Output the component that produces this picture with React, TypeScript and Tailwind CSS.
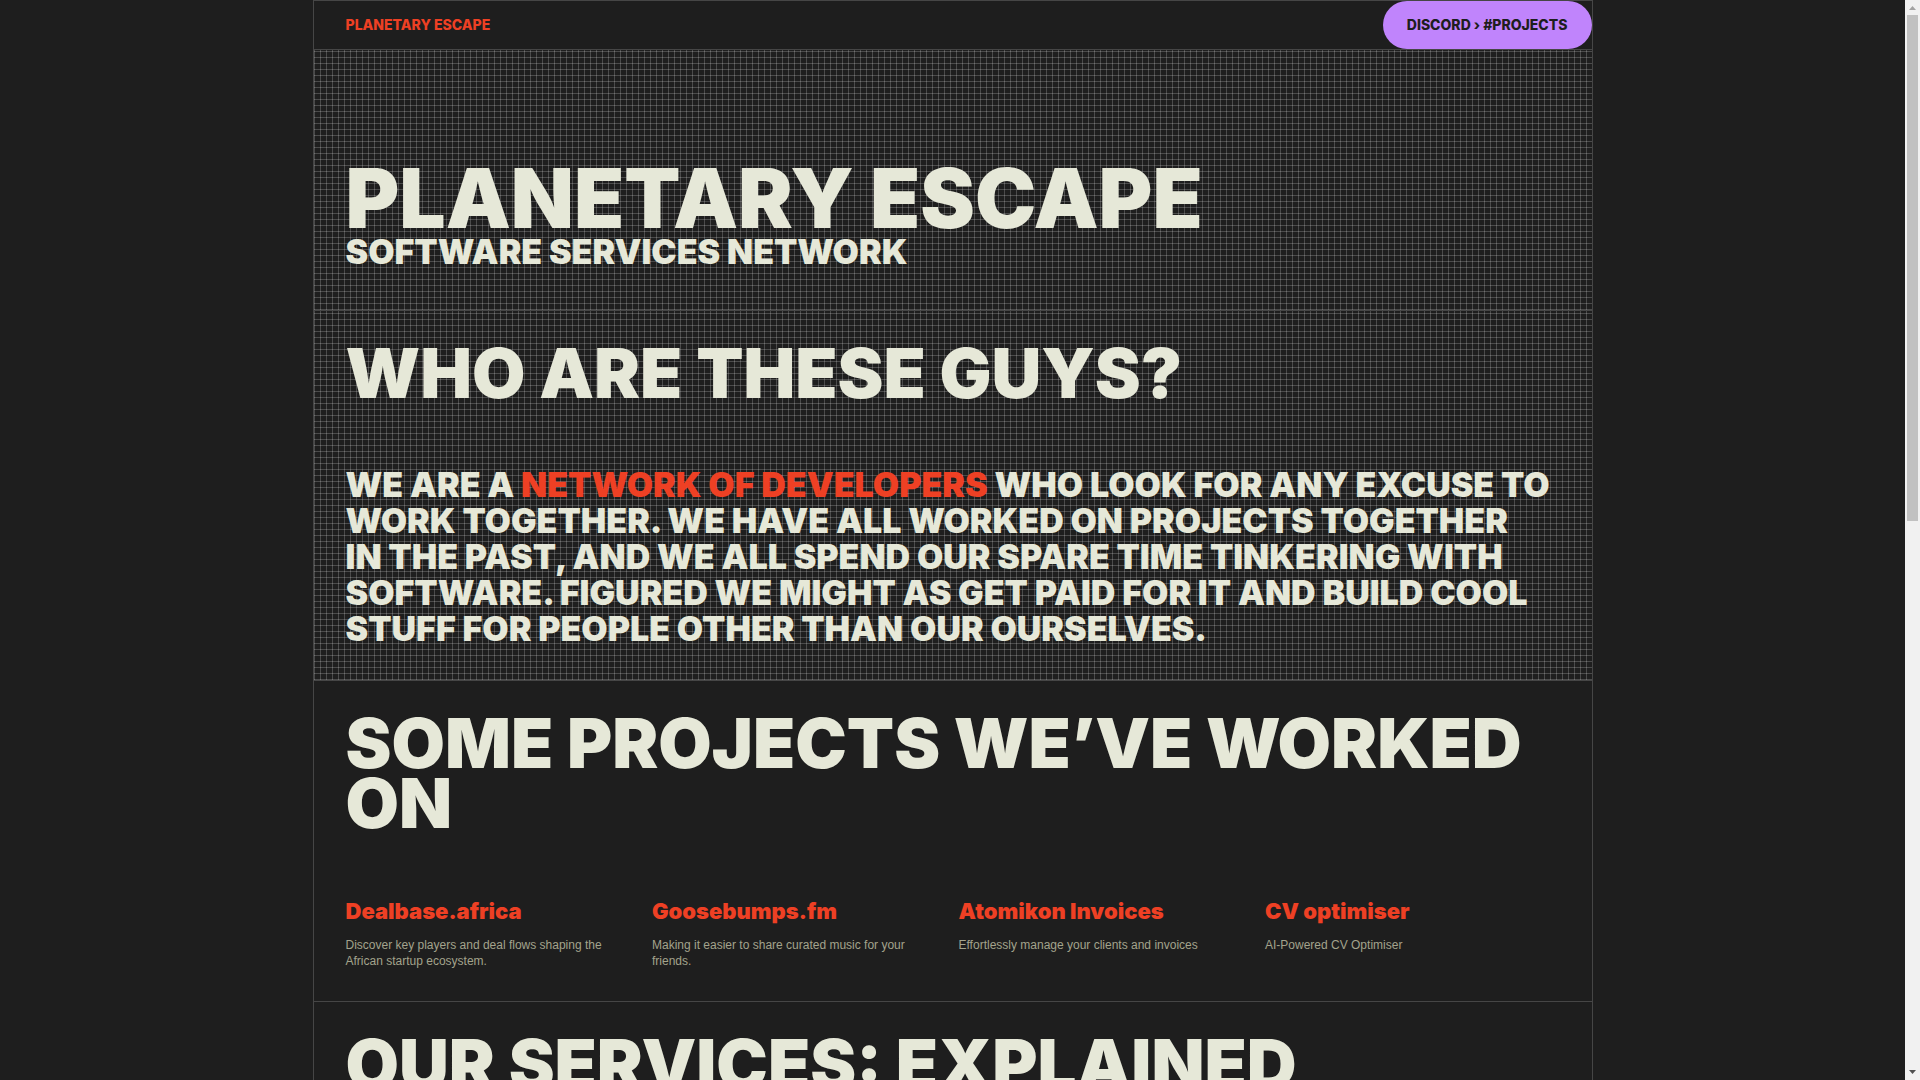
const projects = [
  {
    name: "Dealbase.africa",
    description: "Discover key players and deal flows shaping the African startup ecosystem.",
  },
  {
    name: "Goosebumps.fm",
    description: "Making it easier to share curated music for your friends.",
  },
  {
    name: "Atomikon Invoices",
    description: "Effortlessly manage your clients and invoices",
  },
  {
    name: "CV optimiser",
    description: "AI-Powered CV Optimiser",
  },
];

function Header() {
  return (
    <header className="flex items-center justify-between border-b border-[#464646] pl-8 text-[14px] leading-[48px] font-extrabold">
      <a href="#top" className="text-[#ee4024]">
        PLANETARY ESCAPE
      </a>
      <a
        href="#projects"
        className="rounded-full bg-[#c084fc] px-6 text-[#1e1e1e]"
      >
        DISCORD › #PROJECTS
      </a>
    </header>
  );
}

function Hero() {
  return (
    <section
      id="top"
      className="flex min-h-[261px] flex-col justify-end border-b border-[#464646] bg-[linear-gradient(to_right,rgba(255,255,255,0.2)_1px,transparent_1px),linear-gradient(to_bottom,rgba(255,255,255,0.2)_1px,transparent_1px)] bg-[size:6px_6px] bg-[position:0_1px] px-8 pb-10"
    >
      <h1 className="text-[82px] leading-[70px] font-black">PLANETARY ESCAPE</h1>
      <p className="text-[34px] leading-[36px] font-black">
        SOFTWARE SERVICES NETWORK
      </p>
    </section>
  );
}

function About() {
  return (
    <section className="border-b border-[#464646] bg-[linear-gradient(to_right,rgba(255,255,255,0.2)_1px,transparent_1px),linear-gradient(to_bottom,rgba(255,255,255,0.2)_1px,transparent_1px)] bg-[size:6px_6px] bg-[position:0_2px] px-8 pt-8 pb-[33px]">
      <h2 className="text-[69px] leading-[60px] font-black">WHO ARE THESE GUYS?</h2>
      <p className="mt-16 text-[34px] leading-[36px] font-black">
        WE ARE A{" "}
        <a href="#network" className="text-[#ee4024]">
          NETWORK OF DEVELOPERS
        </a>{" "}
        WHO LOOK FOR ANY EXCUSE TO WORK TOGETHER. WE HAVE ALL WORKED ON PROJECTS
        TOGETHER <br />
        IN THE PAST, AND WE ALL SPEND OUR SPARE TIME TINKERING WITH SOFTWARE.
        FIGURED WE MIGHT AS GET PAID FOR IT AND BUILD COOL STUFF FOR PEOPLE
        OTHER THAN OUR OURSELVES.
      </p>
    </section>
  );
}

function Projects() {
  return (
    <section id="projects" className="border-b border-[#464646] px-8 pt-8 pb-8">
      <h2 className="text-[69px] leading-[60px] font-black">
        SOME PROJECTS WE’VE WORKED ON
      </h2>
      <ul className="mt-16 grid grid-cols-4 gap-3">
        {projects.map((project) => (
          <li key={project.name} className="pr-6">
            <h3 className="text-[22px] leading-7 font-black whitespace-nowrap">
              <a href="#projects" className="text-[#ee4024]">
                {project.name}
              </a>
            </h3>
            <p className="mt-3 font-['Liberation_Sans',sans-serif] text-xs text-[#a3a38c]">
              {project.description}
            </p>
          </li>
        ))}
      </ul>
    </section>
  );
}

function Services() {
  return (
    <section className="px-8 pt-8">
      <h2 className="text-[69px] leading-[60px] font-black">
        OUR SERVICES: EXPLAINED
      </h2>
    </section>
  );
}

function Scrollbar() {
  return (
    <div
      aria-hidden="true"
      className="flex w-[15px] shrink-0 flex-col items-center justify-between bg-[#f1f1f1]"
    >
      <svg width="15" height="15" viewBox="0 0 15 15" className="shrink-0">
        <path d="M4 10 L7.5 6 L11 10 Z" fill="#a3a3a3" />
      </svg>
      <div className="w-full flex-1">
        <div className="mx-auto h-[48.2%] w-[11px] bg-[#c1c1c1]" />
      </div>
      <svg width="15" height="15" viewBox="0 0 15 15" className="shrink-0">
        <path d="M4 5 L11 5 L7.5 9 Z" fill="#505050" />
      </svg>
    </div>
  );
}

export default function App() {
  return (
    <div className="flex h-screen overflow-hidden bg-[#1e1e1e] font-['Inter','Liberation_Sans',sans-serif] text-[#e6e8d8]">
      <main className="min-w-0 flex-1">
        <div className="mx-auto min-h-full max-w-7xl border-x border-t border-[#464646]">
          <Header />
          <Hero />
          <About />
          <Projects />
          <Services />
        </div>
      </main>
      <Scrollbar />
    </div>
  );
}
